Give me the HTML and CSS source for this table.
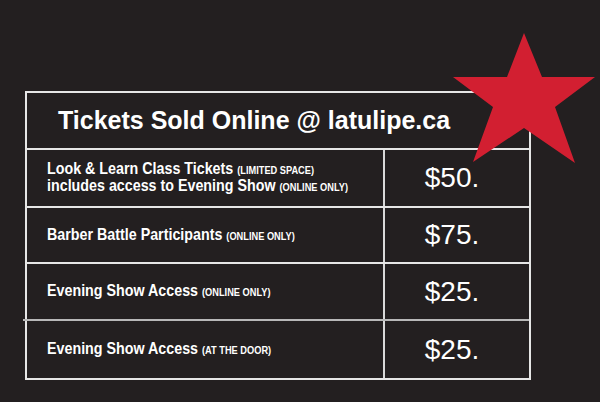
FILE: index.html
```html
<!DOCTYPE html>
<html>
<head>
<meta charset="utf-8">
<link rel="stylesheet" href="styles.css">
</head>
<body>
<div class="page">
  <div class="board">
    <div class="head">Tickets Sold Online @ latulipe.ca</div>
    <div class="row">
      <div class="desc"><span class="txt">Look &amp; Learn Class Tickets <small>(LIMITED SPACE)</small><br>includes access to Evening Show <small>(ONLINE ONLY)</small></span></div>
      <div class="price">$50.</div>
    </div>
    <div class="row">
      <div class="desc"><span class="txt">Barber Battle Participants <small>(ONLINE ONLY)</small></span></div>
      <div class="price">$75.</div>
    </div>
    <div class="row">
      <div class="desc"><span class="txt">Evening Show Access <small>(ONLINE ONLY)</small></span></div>
      <div class="price">$25.</div>
    </div>
    <div class="row last">
      <div class="desc"><span class="txt">Evening Show Access <small>(AT THE DOOR)</small></span></div>
      <div class="price">$25.</div>
    </div>
  </div>
  <svg class="star" width="160" height="150" viewBox="0 0 160 150">
    <polygon points="84,13 102,57 155,57 115,87 135,143 84,108 33,142 53,87 13,57 67,57" fill="#d21f31"/>
  </svg>
</div>
</body>
</html>
```
FILE: styles.css
```css
html, body {
  margin: 0;
  padding: 0;
  background: #231f20;
}
.page {
  position: relative;
  width: 600px;
  height: 402px;
  padding-top: 91px;
  padding-left: 25px;
  box-sizing: border-box;
}
.board {
  width: 506px;
  border: 2px solid #e6e6e6;
  box-sizing: border-box;
  color: #fff;
}
.head {
  height: 55px;
  display: flex;
  align-items: center;
  padding-left: 31px;
  font-family: "Liberation Sans", Arial, sans-serif;
  font-weight: bold;
  font-size: 25px;
  border-bottom: 2px solid #e6e6e6;
}
.row {
  display: grid;
  grid-template-columns: 358px 1fr;
  height: 56px;
  border-bottom: 2px solid #e6e6e6;
  position: relative;
}
.row:nth-child(3) { height: 54px; }
.row:nth-child(4) { height: 55px; border-bottom-color: #b8b8b8; }
.row:nth-child(4)::after {
  content: "";
  position: absolute;
  left: -4px;
  right: 2px;
  bottom: -2px;
  height: 2px;
  background: #b8b8b8;
}
.row.last { height: 57px; border-bottom: 0; }
.desc {
  display: flex;
  align-items: center;
  padding-left: 20px;
  border-right: 2px solid #d8d8d8;
  font-family: "Liberation Sans", Arial, sans-serif;
  font-weight: bold;
  font-size: 17px;
  line-height: 16px;
  overflow: hidden;
}
.txt {
  display: inline-block;
  white-space: nowrap;
  transform: scaleX(0.84);
  transform-origin: left center;
}
.desc small {
  font-size: 11px;
}
.price {
  display: flex;
  align-items: center;
  justify-content: center;
  padding-right: 10px;
  font-family: "Liberation Sans", Arial, sans-serif;
  font-size: 28px;
}
.star {
  position: absolute;
  left: 440px;
  top: 20px;
}
```
